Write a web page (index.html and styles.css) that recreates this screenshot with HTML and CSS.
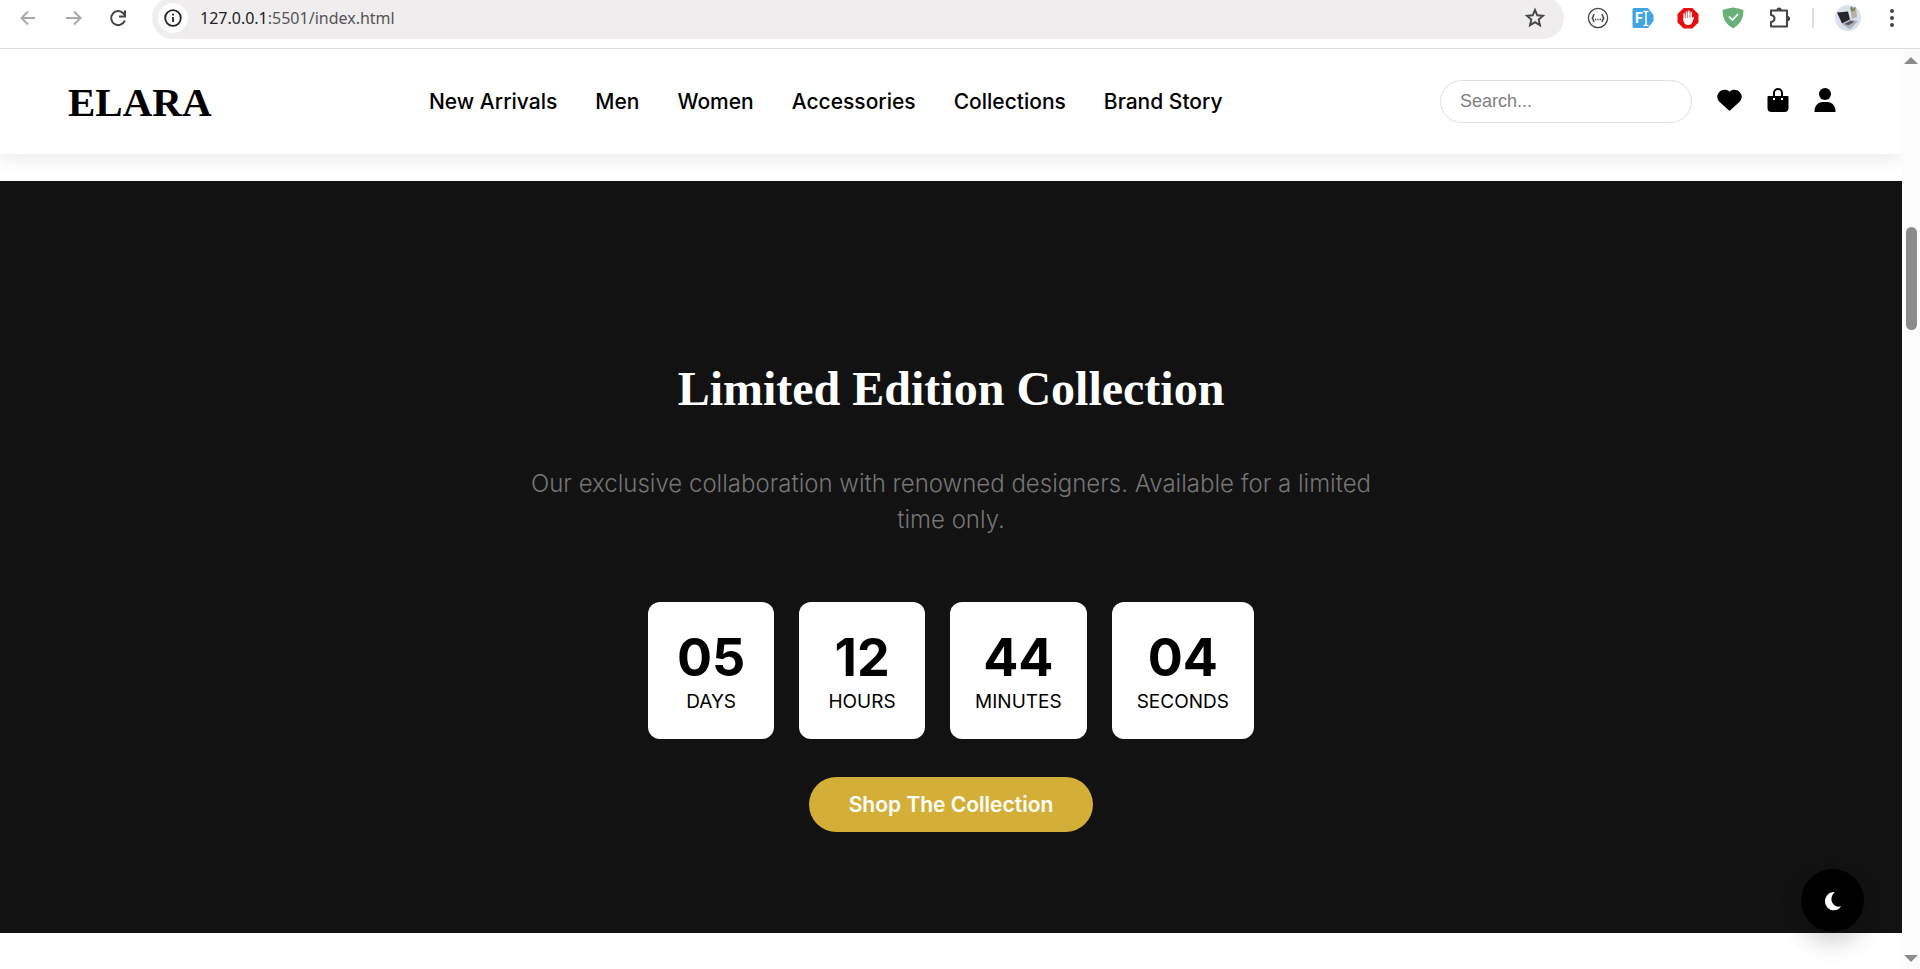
FILE: index.html
```html
<!DOCTYPE html>
<html lang="en">
<head>
    <meta charset="UTF-8">
    <meta name="viewport" content="width=device-width, initial-scale=1.0">
    <title>ELARA</title>
    <link rel="stylesheet" href="styles.css">
</head>
<body>
    <!-- Browser toolbar -->
    <div class="toolbar">
        <div class="toolbar-group">
            <button class="tool faded" aria-label="Back">
                <svg width="22" height="22" viewBox="0 0 22 22" fill="none" stroke="currentColor" stroke-width="2"><path d="M18 11H5M11 4.500L4.500 11l6.500 6.500"/></svg>
            </button>
            <button class="tool faded" aria-label="Forward">
                <svg width="22" height="22" viewBox="0 0 22 22" fill="none" stroke="currentColor" stroke-width="2"><path d="M4 11h14M12 4.500l6.500 6.500-6.500 6.500"/></svg>
            </button>
            <button class="tool" aria-label="Reload">
                <svg width="22" height="22" viewBox="0 0 22 22" fill="none" stroke="currentColor" stroke-width="2"><path d="M17.800 13.500A7 7 0 1 1 16.500 6.500L18 8.500"/><path d="M18 3.500v6h-6"/></svg>
            </button>
        </div>
        <div class="address-bar">
            <span class="site-info">
                <svg width="18" height="18" viewBox="0 0 18 18" fill="none" stroke="#222" stroke-width="1.800"><circle cx="9" cy="9" r="7.800"/><path d="M9 8v5M9 4.800v1.800"/></svg>
            </span>
            <span class="url">127.0.0.1<span>:5501/index.html</span></span>
            <button class="tool star" aria-label="Bookmark">
                <svg width="22" height="22" viewBox="0 0 22 22" fill="none" stroke="currentColor" stroke-width="1.900"><path d="M11 3l2.300 5.300 5.700.5-4.300 3.800 1.300 5.600-5-3-5 3 1.300-5.600L3 8.800l5.700-.5z"/></svg>
            </button>
        </div>
        <div class="toolbar-group">
            <svg width="22" height="22" viewBox="0 0 22 22" fill="none" stroke="#444" stroke-width="1.300"><circle cx="11" cy="11" r="9.600"/><path d="M7.500 7.500C5.500 7.500 7 10.500 4.800 11 7 11.500 5.500 14.500 7.500 14.500M14.500 7.500c2 0 .5 3 2.700 3.500-2.200.5-.7 3.500-2.700 3.500" stroke-width="1.600"/><path d="M8 12.500h6" stroke-dasharray="1.300 1"/></svg>
            <svg width="22" height="22" viewBox="0 0 22 22"><path d="M2 1h14l5.500 7v6L16 21H2a1.500 1.500 0 0 1-1.500-1.500v-17A1.500 1.500 0 0 1 2 1z" fill="#42a5e2"/><text class="badge-letter" x="3" y="16">F</text><path d="M11.500 4.500h1.500q1 0 1 1 0-1 1-1h1.500M14 5.500v12M11.500 18.500h1.500q1 0 1-1 0 1 1 1h1.500" fill="none" stroke="#fff" stroke-width="1.500"/></svg>
            <svg width="22" height="22" viewBox="0 0 22 22"><path d="M6.700 1h8.600L21.500 7v8.500L15.300 21.500H6.700L.5 15.500V7z" fill="#e60f10"/><path d="M7.300 7v6M9.600 5v8M11.900 4.300v8M14.200 5.500v8" stroke="#fff" stroke-width="1.700" stroke-linecap="round"/><path d="M6.500 11h8.500l1-1q1.400-.3 1 .8L15 16q-1 2-3.500 2-5 0-5-5z" fill="#fff"/></svg>
            <svg width="22" height="22" viewBox="0 0 22 22"><path d="M11 .5q5.500.5 10.500 2.500Q22 15 11 21.500 0 15 .5 3 5.500 1 11 .5z" fill="#68b279"/><path d="M7 9.500l3.500 3.500L16 7" fill="none" stroke="#fff" stroke-width="1.700"/></svg>
            <svg width="24" height="24" viewBox="0 0 24 24" fill="#444"><path d="M4 4.500h16v16H4v-4.500q3.500-.5 3.500-3.500T4 9z" fill="none" stroke="#444" stroke-width="2" stroke-linejoin="round"/><path d="M9.500 4a2.600 2.600 0 0 1 5.200 0zM20.500 10a2.600 2.600 0 0 1 0 5.200z"/></svg>
        </div>
        <div class="toolbar-group profile-group">
            <span class="divider"></span>
            <svg width="26" height="26" viewBox="0 0 26 26">
                <clipPath id="avatar"><circle cx="13" cy="13" r="13"/></clipPath>
                <g clip-path="url(#avatar)"><path fill="#d9e0ee" d="M0 0h26v26H0z"/><path fill="#b5b4a4" d="M15 3l6-1 1 10-5 2z"/><path fill="#7d8752" d="M15 3l2-2 1 3 3-3-1 4-3 2z"/><path fill="#26272b" d="M2 7.500l11-1 2 8-8 4z"/><path fill="#b0b1b8" d="M7 19l8-4.500 8 1.500-8 8.500z"/><path fill="#55575c" d="M9.500 19l6-3.300 4 1-6 3.500z"/></g>
            </svg>
            <button class="tool kebab" aria-label="Menu">
                <svg width="20" height="22" viewBox="0 0 20 22" fill="currentColor"><circle cx="10" cy="4" r="2"/><circle cx="10" cy="11" r="2"/><circle cx="10" cy="18" r="2"/></svg>
            </button>
        </div>
    </div>

    <div class="window">
        <div class="page">
            <header class="header">
                <a href="#" class="logo">ELARA</a>
                <nav class="nav">
                    <a href="#">New Arrivals</a>
                    <a href="#">Men</a>
                    <a href="#">Women</a>
                    <a href="#">Accessories</a>
                    <a href="#">Collections</a>
                    <a href="#">Brand Story</a>
                </nav>
                <div class="header-actions">
                    <input type="text" class="search" placeholder="Search..." aria-label="Search">
                    <a href="#" aria-label="Wishlist">
                        <svg width="25" height="24" viewBox="0 0 25 24" fill="currentColor"><path d="M12.500 3.700C15.500 1 20 1.300 22.600 3.900c3 3 2.700 7.100 0 9.800L13.300 22.300q-.8.700-1.600 0L2.400 13.700c-2.700-2.700-3-6.800 0-9.800C5 1.300 9.500 1 12.500 3.700z"/></svg>
                    </a>
                    <a href="#" aria-label="Cart">
                        <svg width="22" height="24" viewBox="0 0 22 24" fill="currentColor"><path fill-rule="evenodd" d="M6 8V5a5 5 0 0 1 10 0v3h4.500a1 1 0 0 1 1 1v11a4 4 0 0 1-4 4h-13a4 4 0 0 1-4-4V9a1 1 0 0 1 1-1zM8 8h6V5a3 3 0 0 0-6 0zM6 10v2h2v-2zM14 10v2h2v-2z"/></svg>
                    </a>
                    <a href="#" aria-label="Account">
                        <svg width="22" height="24" viewBox="0 0 22 24" fill="currentColor"><circle cx="11" cy="6" r="6"/><path d="M.5 24v-1c0-5 3.500-9 8-9h5c4.500 0 8 4 8 9v1z"/></svg>
                    </a>
                </div>
            </header>

            <section class="limited">
                <h2>Limited Edition Collection</h2>
                <p>Our exclusive collaboration with renowned designers. Available for a limited time only.</p>
                <div class="countdown">
                    <div class="countdown-item"><span class="number">05</span><span class="label">DAYS</span></div>
                    <div class="countdown-item"><span class="number">12</span><span class="label">HOURS</span></div>
                    <div class="countdown-item"><span class="number">44</span><span class="label">MINUTES</span></div>
                    <div class="countdown-item"><span class="number">04</span><span class="label">SECONDS</span></div>
                </div>
                <a href="#" class="btn">Shop The Collection</a>
            </section>

            <button class="theme-toggle" aria-label="Toggle dark mode">
                <svg width="20" height="20" viewBox="0 0 20 20" fill="#fff"><path d="M11.800 1C8.500 4 7.500 8.500 9.500 12c1.800 3.200 5 4.300 8.500 3.300-1.500 2.500-4 4-7 4C6 19.300 2 15.200 2 10.200 2 5 6.300.5 11.800 1z"/></svg>
            </button>
        </div>

        <div class="scrollbar">
            <svg width="14" height="7" viewBox="0 0 14 7" fill="#8b8b8b"><path d="M7 0l7 7H0z"/></svg>
            <div class="scroll-track"><div class="scroll-thumb"></div></div>
            <svg width="14" height="7" viewBox="0 0 14 7" fill="#8b8b8b"><path d="M0 0h14L7 7z"/></svg>
        </div>
    </div>
</body>
</html>
```
FILE: styles.css
```css
* {
    margin: 0;
    padding: 0;
    box-sizing: border-box;
}

body {
    display: flex;
    flex-direction: column;
    height: 100vh;
    overflow: hidden;
    background-color: #fff;
    color: #000;
    font-family: Inter, 'Liberation Sans', sans-serif;
}

a {
    color: inherit;
    text-decoration: none;
}

button {
    border: none;
    background: none;
    cursor: pointer;
}

svg {
    display: block;
    flex-shrink: 0;
}

/* Browser toolbar */
.toolbar {
    display: flex;
    align-items: center;
    gap: 23px;
    flex-shrink: 0;
    height: 49px;
    padding: 0 18px 12px 17px;
    border-bottom: 1px solid #dedede;
}

.toolbar-group {
    display: flex;
    align-items: center;
    gap: 23px;
}

.profile-group {
    gap: 21px;
    margin-left: -2px;
}

.tool {
    color: #444;
}

.tool.faded {
    color: #a9a9a9;
}

.address-bar {
    flex: 1;
    display: flex;
    align-items: center;
    height: 42px;
    padding: 0 18px 0 6px;
    border-radius: 21px;
    background-color: #efedee;
}

.site-info {
    display: flex;
    align-items: center;
    justify-content: center;
    width: 30px;
    height: 30px;
    border-radius: 50%;
    background-color: #fff;
}

.url {
    margin-left: 12px;
    font-family: 'Noto Sans', sans-serif;
    font-size: 16px;
    color: #222;
}

.url span {
    color: #555;
}

.star {
    margin-left: auto;
}

.badge-letter {
    font-family: Roboto, sans-serif;
    font-size: 14px;
    font-weight: 700;
    fill: #fff;
}

.divider {
    width: 2px;
    height: 20px;
    background-color: #dedede;
}

/* Page and scrollbar */
.window {
    flex: 1;
    display: flex;
    min-height: 0;
}

.page {
    flex: 1;
    position: relative;
    overflow: hidden;
}

.scrollbar {
    display: flex;
    flex-direction: column;
    align-items: center;
    width: 18px;
    padding: 8px 0 7px;
    background-color: #fcfcfc;
}

.scroll-track {
    flex: 1;
    padding-top: 163px;
}

.scroll-thumb {
    width: 11px;
    height: 103px;
    border-radius: 6px;
    background-color: #8b8b8b;
}

/* Header */
.header {
    display: flex;
    align-items: center;
    justify-content: space-between;
    height: 105px;
    padding: 0 66px 0 68px;
    background-color: #fff;
    box-shadow: 0 5px 18px rgba(0, 0, 0, 0.08);
}

.logo {
    font-family: 'Liberation Serif', serif;
    font-size: 41px;
    font-weight: 700;
}

.nav {
    display: flex;
    gap: 38px;
    font-size: 21px;
    font-weight: 500;
}

.header-actions {
    display: flex;
    align-items: center;
    gap: 25px;
}

.header-actions a {
    padding-bottom: 4px;
}

.search {
    width: 252px;
    height: 43px;
    padding: 0 19px;
    border: 1px solid #e0e0e0;
    border-radius: 22px;
    font-family: 'Liberation Sans', sans-serif;
    font-size: 18px;
    outline: none;
}

.search::placeholder {
    color: #808080;
}

/* Limited edition */
.limited {
    display: flex;
    flex-direction: column;
    align-items: center;
    margin-top: 27px;
    padding: 178px 40px 101px;
    background-color: #121212;
    text-align: center;
}

.limited h2 {
    margin-bottom: 47px;
    font-family: 'Liberation Serif', serif;
    font-size: 48px;
    line-height: 60px;
    color: #fff;
}

.limited p {
    max-width: 875px;
    margin-bottom: 64px;
    font-size: 24px;
    font-weight: 300;
    line-height: 36px;
    color: #757575;
}

.countdown {
    display: flex;
    gap: 25px;
    margin-bottom: 38px;
}

.countdown-item {
    display: flex;
    flex-direction: column;
    min-width: 126px;
    padding: 25px;
    border-radius: 12px;
    background-color: #fff;
}

.number {
    font-size: 52px;
    font-weight: 700;
    line-height: 62px;
}

.label {
    font-size: 19px;
    line-height: 25px;
}

.btn {
    padding: 0 40px;
    border-radius: 28px;
    background-color: #d4af37;
    color: #fff;
    font-size: 21px;
    font-weight: 600;
    line-height: 55px;
}

.theme-toggle {
    position: absolute;
    right: 38px;
    bottom: 37px;
    display: flex;
    align-items: center;
    justify-content: center;
    width: 63px;
    height: 63px;
    border-radius: 50%;
    background-color: #000;
    box-shadow: 0 10px 25px rgba(0, 0, 0, 0.2);
}
```
